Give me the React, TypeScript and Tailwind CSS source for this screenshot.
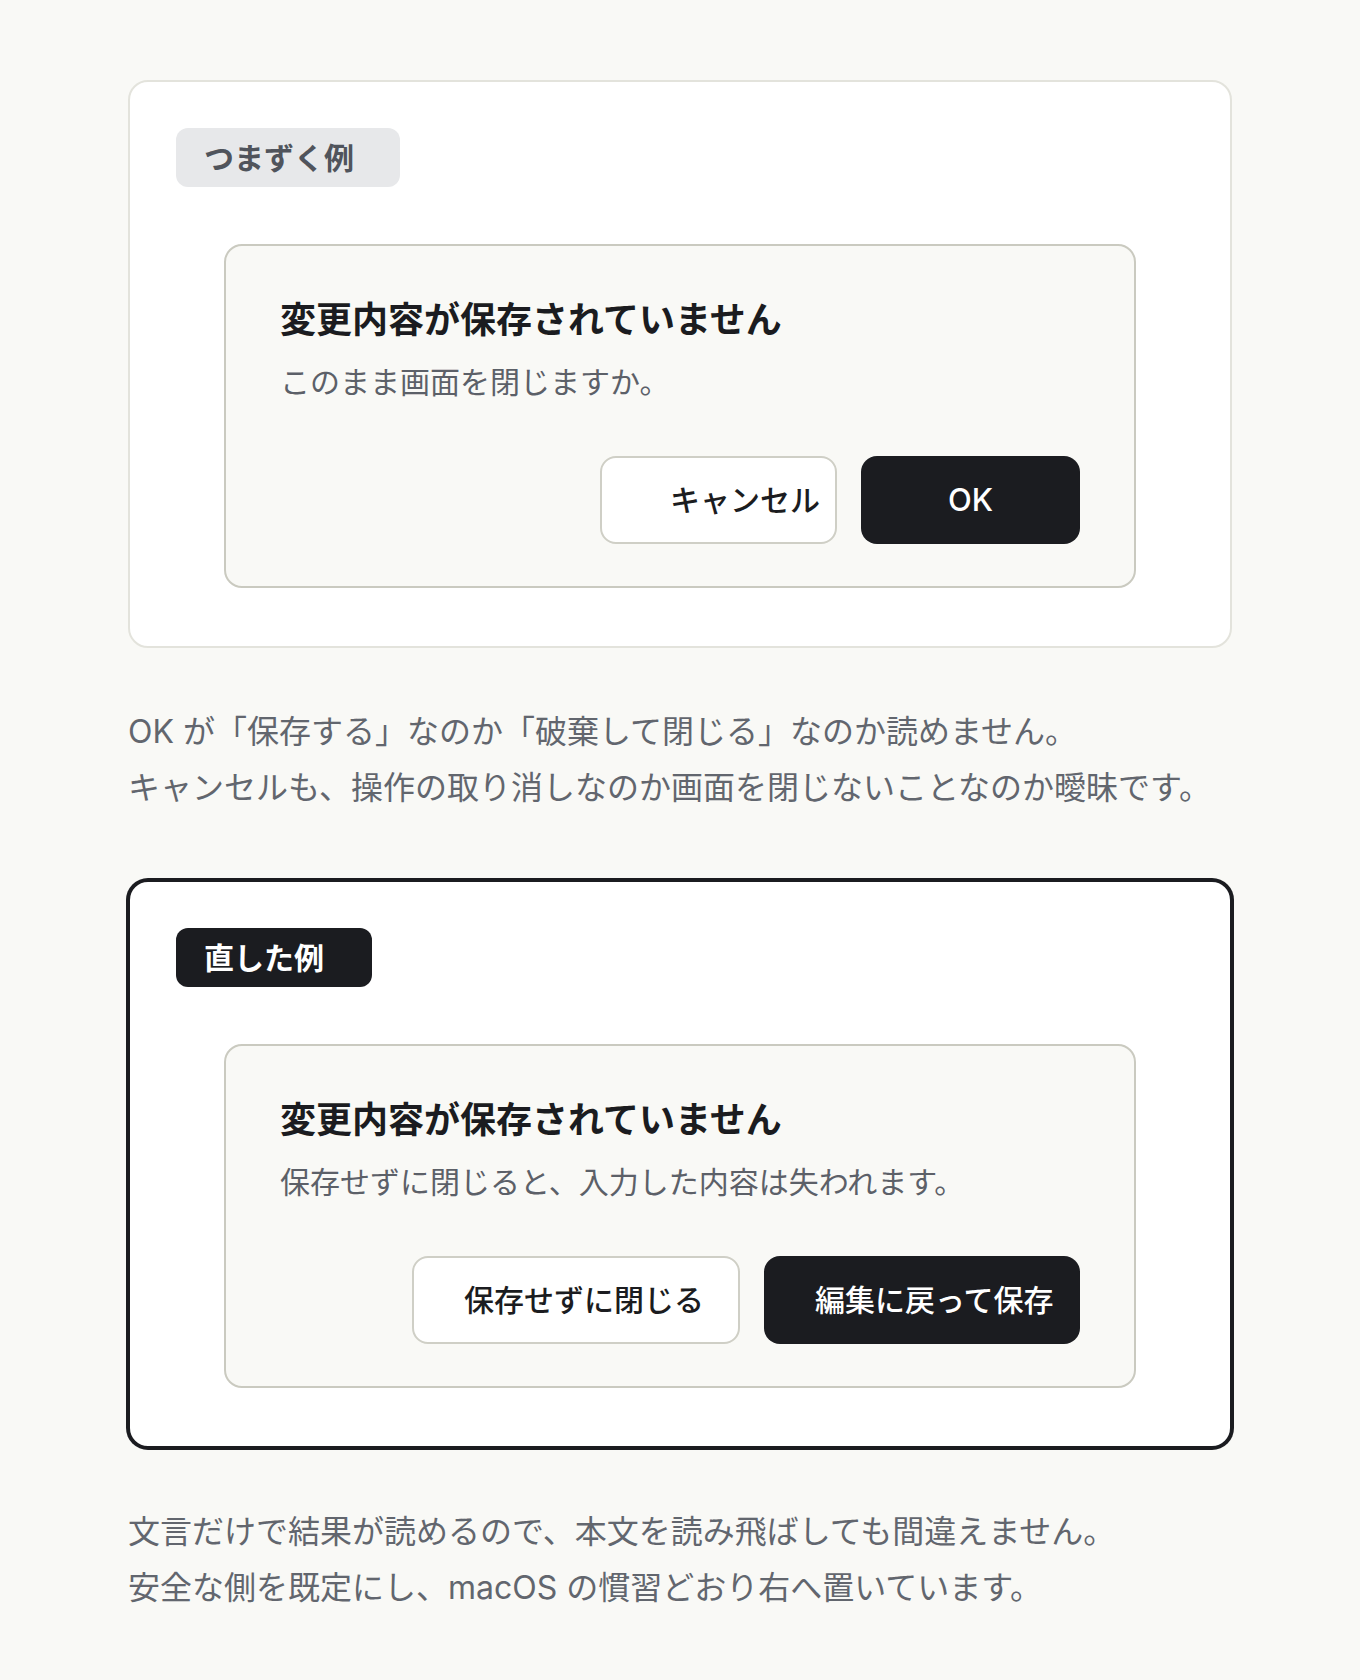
import type { ReactNode } from "react";

type Tone = "bad" | "good";

interface ActionButton {
  label: string;
  className: string;
}

interface Example {
  tone: Tone;
  tag: string;
  message: string;
  secondary: ActionButton;
  primary: ActionButton;
  note: string[];
}

const examples: Example[] = [
  {
    tone: "bad",
    tag: "つまずく例",
    message: "このまま画面を閉じますか。",
    secondary: { label: "キャンセル", className: "w-[237px] pl-[68px]" },
    primary: { label: "OK", className: "w-[219px] justify-center text-[31px]" },
    note: [
      "OK が「保存する」なのか「破棄して閉じる」なのか読めません。",
      "キャンセルも、操作の取り消しなのか画面を閉じないことなのか曖昧です。",
    ],
  },
  {
    tone: "good",
    tag: "直した例",
    message: "保存せずに閉じると、入力した内容は失われます。",
    secondary: { label: "保存せずに閉じる", className: "w-[328px] pl-[50px]" },
    primary: { label: "編集に戻って保存", className: "w-[316px] pl-[51px]" },
    note: [
      "文言だけで結果が読めるので、本文を読み飛ばしても間違えません。",
      "安全な側を既定にし、macOS の慣習どおり右へ置いています。",
    ],
  },
];

function Tag({ tone, children }: { tone: Tone; children: ReactNode }) {
  return (
    <span
      className={`flex h-[59px] w-fit items-center rounded-xl pl-7 text-[30px] font-semibold leading-none ${
        tone === "good"
          ? "bg-[#1b1c20] pr-12 text-white"
          : "bg-[#e7e8ea] pr-[46px] text-[#50545c]"
      }`}
    >
      {children}
    </span>
  );
}

function DialogPreview({ example }: { example: Example }) {
  return (
    <div className="mx-12 mt-[57px] rounded-[18px] border-2 border-[#cacac0] bg-[#f9f9f6] px-[54px] pt-[54px] pb-[42px]">
      <h2 className="text-[36px] font-bold leading-[40px] text-[#1b1c20]">
        変更内容が保存されていません
      </h2>
      <p className="mt-5 text-[30px] leading-[45px] text-[#5c6068]">
        {example.message}
      </p>
      <div className="mt-[51px] flex justify-end gap-6">
        <button
          className={`flex h-[88px] items-center whitespace-nowrap rounded-2xl border-2 border-[#cfcfc6] bg-white text-[30px] font-medium text-[#1b1c20] ${example.secondary.className}`}
        >
          {example.secondary.label}
        </button>
        <button
          className={`flex h-[88px] items-center whitespace-nowrap rounded-2xl bg-[#1b1c20] text-[30px] font-medium text-white ${example.primary.className}`}
        >
          {example.primary.label}
        </button>
      </div>
    </div>
  );
}

function ExampleCard({ example, first }: { example: Example; first: boolean }) {
  return (
    <>
      <section
        className={`rounded-[20px] border-2 bg-white px-[46px] pt-[46px] pb-[58px] ${
          example.tone === "good"
            ? "border-[#1b1c20] ring-2 ring-[#1b1c20]"
            : "border-[#e3e3dc]"
        } ${first ? "" : "mt-16"}`}
      >
        <Tag tone={example.tone}>{example.tag}</Tag>
        <DialogPreview example={example} />
      </section>
      <p className="mt-14 text-[32px] leading-[56px] text-[#62666e]">
        {example.note.map((line) => (
          <span key={line} className="block whitespace-nowrap">
            {line}
          </span>
        ))}
      </p>
    </>
  );
}

export default function App() {
  return (
    <div className="min-h-screen bg-[#f9f9f6] px-32 pt-20 pb-16 font-['Inter','Noto_Sans_CJK_JP',sans-serif]">
      {examples.map((example, i) => (
        <ExampleCard key={example.tag} example={example} first={i === 0} />
      ))}
    </div>
  );
}
